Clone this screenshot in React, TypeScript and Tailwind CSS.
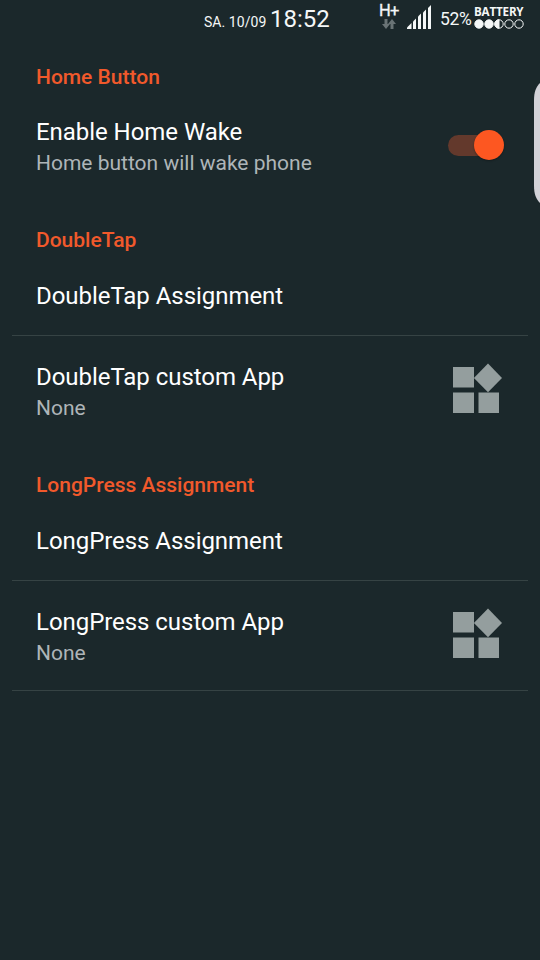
import * as React from "react";

const SignalIcon: React.FC = () => (
  <svg className="h-6 w-6" viewBox="0 0 24 24" fill="#f4f7f7">
    <path d="M0 24v-1.500L4.500 18v6z" />
    <path d="M6 24v-7.500L9 13.500V24z" />
    <path d="M11 24V11.500L14 8.500V24z" />
    <path d="M16 24V7.500L19 4.500V24z" />
    <path d="M21 24V3L24 0v24z" />
  </svg>
);

const DataArrowsIcon: React.FC = () => (
  <svg className="h-[10px] w-[14px]" viewBox="0 0 14 10" fill="#697375">
    <path d="M2.500 0h3v5H8L4 10 0 5h2.500z" />
    <path d="M8.500 10h3V5H14L10 0 6 5h2.500z" />
  </svg>
);

const BatteryDots: React.FC = () => (
  <svg className="h-[10px] w-[50px]" viewBox="0 0 50 10" fill="none" stroke="#f4f7f7">
    <circle cx="5" cy="5" r="4.200" fill="#f4f7f7" />
    <circle cx="15" cy="5" r="4.200" fill="#f4f7f7" />
    <circle cx="25" cy="5" r="4.200" />
    <path d="M25 .8a4.200 4.200 0 0 0 0 8.400z" fill="#f4f7f7" />
    <circle cx="35" cy="5" r="4.200" />
    <circle cx="45" cy="5" r="4.200" />
  </svg>
);

const WidgetsIcon: React.FC = () => (
  <svg className="mr-[2px] mb-[5px] h-[50px] w-[50px]" viewBox="0 0 50 50" fill="#949e9e">
    <path d="M1 4h21v20.500H1zM1 29.500h21V50H1zM26.500 29.500h20.500V50H26.500z" />
    <path d="M36 .5 50 15 36 29.300 21.900 15z" />
  </svg>
);

const Toggle: React.FC = () => (
  <button role="switch" aria-checked="true" className="mb-px flex h-[30px] w-14 items-center">
    <span className="h-[21px] w-9 rounded-l-full bg-[#63392c]" />
    <span className="-ml-[10px] h-[30px] w-[30px] shrink-0 rounded-full bg-[#fd5721] shadow-[0_1px_2px_rgba(0,0,0,0.3)]" />
  </button>
);

const StatusBar: React.FC = () => (
  <header className="flex h-9 text-[#f4f7f7]">
    <div className="flex w-[378px] items-baseline pl-[204px] whitespace-nowrap">
      <span className="w-[66px] text-[14px] leading-9 tracking-[0.05px]">SA. 10/09</span>
      <span className="text-[24px] leading-[38px]">18:52</span>
    </div>
    <div className="w-[29px] pt-[2px]">
      <div className="pl-[1px] text-[16.5px] leading-[17px] tracking-[-0.8px] [-webkit-text-stroke:0.3px]">H+</div>
      <div className="pl-1">
        <DataArrowsIcon />
      </div>
    </div>
    <div className="w-[33px] pt-[5px]">
      <SignalIcon />
    </div>
    <span className="w-[34px] text-[17.5px] leading-[38px] tracking-[-0.35px]">52%</span>
    <div className="pt-[5px]">
      <div className="h-[14px] w-[50px] origin-left scale-x-[0.93] font-['Open_Sans'] text-[12.5px] leading-[14px] font-bold tracking-[-0.2px]">
        BATTERY
      </div>
      <BatteryDots />
    </div>
  </header>
);

const SectionTitle: React.FC<{children: React.ReactNode; first?: boolean}> = ({children, first}) => (
  <h2
    className={`flex h-[57px] items-end px-6 text-[21px] leading-[25px] font-medium text-[#f1592b] ${
      first ? "pb-px" : "pb-1"
    }`}
  >
    {children}
  </h2>
);

const Preference: React.FC<{
  title: string;
  summary?: string;
  widget?: React.ReactNode;
  divider?: boolean;
}> = ({title, summary, widget, divider}) => (
  <div
    className={`box-content flex items-center justify-between ${summary ? "h-[109px]" : "h-[78px]"} ${
      divider ? "border-b border-[#364344]" : ""
    }`}
  >
    <div className={`pl-6 ${summary ? "pt-[3px]" : ""}`}>
      <div className="text-[24px] leading-7 tracking-[-0.05px] text-white">{title}</div>
      {summary && <div className="mt-[5px] text-[21px] leading-[25px] text-[#aeb5b8]">{summary}</div>}
    </div>
    {widget && <div className="flex pr-6">{widget}</div>}
  </div>
);

const App: React.FC = () => (
  <div className="relative h-[960px] w-[540px] overflow-hidden bg-[#1b282b] font-[Roboto,sans-serif]">
    <StatusBar />
    <main className="-mt-[2px] px-3">
      <SectionTitle first>Home Button</SectionTitle>
      <Preference title="Enable Home Wake" summary="Home button will wake phone" widget={<Toggle />} />
      <SectionTitle>DoubleTap</SectionTitle>
      <Preference title="DoubleTap Assignment" divider />
      <Preference title="DoubleTap custom App" summary="None" widget={<WidgetsIcon />} />
      <SectionTitle>LongPress Assignment</SectionTitle>
      <Preference title="LongPress Assignment" divider />
      <Preference title="LongPress custom App" summary="None" widget={<WidgetsIcon />} divider />
    </main>
    {/* edge panel handle */}
    <svg className="absolute top-[83px] right-0 h-[120px] w-[6px]" viewBox="0 0 6 120" fill="#d3d2d8">
      <path d="M6 0C2 4 0 9 0 17v86c0 8 2 13 6 17z" />
    </svg>
  </div>
);

export default App;
